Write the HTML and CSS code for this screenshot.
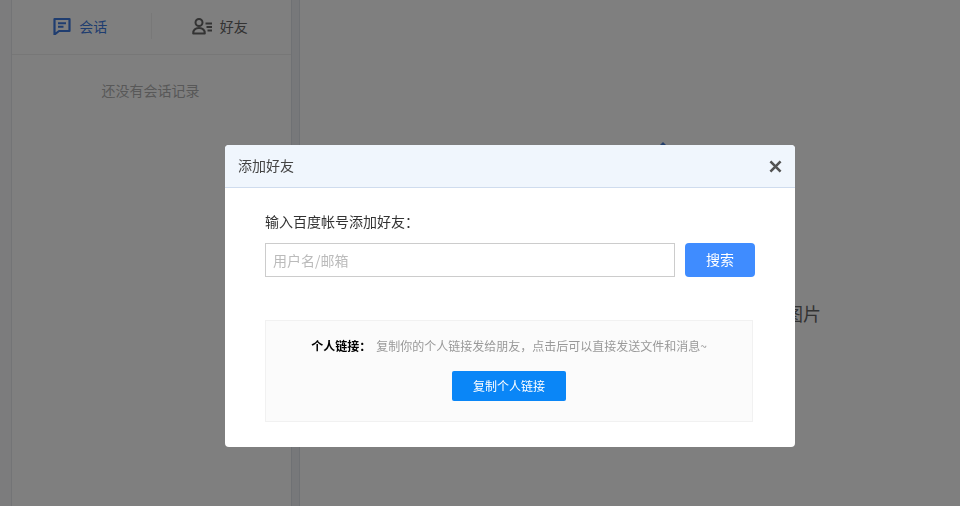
FILE: index.html
```html
<!DOCTYPE html>
<html lang="zh-CN">
<head>
<meta charset="utf-8">
<title>添加好友</title>
<link rel="stylesheet" href="styles.css">
</head>
<body>
<div class="app">
  <div class="strip"></div>
  <aside class="sidebar">
    <nav class="tabs">
      <div class="tab tab-active">
        <svg class="tab-icon" viewBox="0 0 18 18" width="18" height="18" aria-hidden="true"><path d="M1.500 2h15v12H6L1.500 17.500z" fill="none" stroke="currentColor" stroke-width="2.200" stroke-linejoin="round"/><path d="M5 6.200h8M5 9.800h5.500" stroke="currentColor" stroke-width="2"/></svg>
        <span>会话</span>
      </div>
      <div class="tab-divider"></div>
      <div class="tab tab-friends">
        <svg class="tab-icon" viewBox="0 0 20 18" width="20" height="18" aria-hidden="true"><circle cx="7" cy="5.500" r="3.500" fill="none" stroke="currentColor" stroke-width="2"/><path d="M1.200 16.500c0-3.800 2.200-5.500 5.800-5.500s5.800 1.700 5.800 5.500z" fill="none" stroke="currentColor" stroke-width="2" stroke-linejoin="round"/><path d="M13.500 6.500H20M14.500 10H20M15.500 13.500H20" stroke="currentColor" stroke-width="1.800"/></svg>
        <span>好友</span>
      </div>
    </nav>
    <p class="empty">还没有会话记录</p>
  </aside>
  <div class="gutter"></div>
  <main class="main">
    <div class="marker"></div>
    <p class="hint">你可以和好友在这里快速传输与分享文件和图片</p>
  </main>
</div>
<div class="overlay"></div>
<section class="dialog">
  <header class="dialog-head">
    <h2 class="dialog-title">添加好友</h2>
    <svg class="close" viewBox="0 0 12 12" width="13" height="13" aria-hidden="true"><path d="M1.300 1.300l9.400 9.400M10.700 1.300l-9.400 9.400" stroke="currentColor" stroke-width="2.400"/></svg>
  </header>
  <div class="dialog-body">
    <label class="field-label">输入百度帐号添加好友：</label>
    <div class="search-row">
      <input class="search-input" type="text" placeholder="用户名/邮箱">
      <button class="search-btn" type="button">搜索</button>
    </div>
    <div class="link-box">
      <p class="link-text"><b>个人链接：</b>复制你的个人链接发给朋友，点击后可以直接发送文件和消息~</p>
      <button class="copy-btn" type="button">复制个人链接</button>
    </div>
  </div>
</section>
</body>
</html>
```
FILE: styles.css
```css
* { box-sizing: border-box; }
html, body { margin: 0; height: 100%; overflow: hidden; }
body {
  font-family: "Noto Sans CJK SC", "Liberation Sans", sans-serif;
  background: #fff;
}
.app { display: flex; height: 506px; background: #fff; }
.strip { width: 12px; background: #f8f9fb; border-right: 1px solid #e6e8ec; }
.sidebar { width: 279px; background: #fff; }
.gutter { width: 9px; background: #eef0f4; border-left: 1px solid #dfe2e8; border-right: 1px solid #dfe2e8; }
.main { flex: 1; display: flex; flex-direction: column; align-items: center; padding: 142px 0 0 4px; }

.tabs { display: flex; align-items: center; height: 55px; padding-bottom: 2px; border-bottom: 1px solid #eee; }
.tab { flex: 1; display: flex; align-items: center; justify-content: center; gap: 8px; font-size: 14px; color: #666; }
.tab-active { color: #3f7be0; padding-right: 2px; }
.tab-friends { padding-right: 3px; }
.tab-divider { width: 1px; height: 26px; background: #f0f0f0; }
.tab-icon { flex: none; }
.empty { margin: 25px 0 0; padding-right: 2px; text-align: center; font-size: 14px; line-height: 20px; color: #b0b0b0; }

.marker {
  width: 0; height: 0; margin-left: 62px;
  border-left: 5px solid transparent; border-right: 5px solid transparent;
  border-bottom: 5px solid #4a80d8;
}
.hint { margin: 153px 0 0; font-size: 18px; line-height: 26px; color: #666; white-space: nowrap; }

.overlay { position: fixed; inset: 0; background: rgba(0, 0, 0, .5); }
.dialog {
  position: fixed; left: 225px; top: 145px; width: 570px; height: 302px;
  background: #fff; border-radius: 4px; overflow: hidden;
}
.dialog-head {
  display: flex; align-items: center; justify-content: space-between;
  height: 43px; padding: 0 13px 2px 13px;
  background: #f0f6fd; border-bottom: 1px solid #cfdcee;
}
.dialog-title { margin: 0; font-size: 14px; font-weight: 400; color: #444; }
.close { color: #555; margin-top: 2px; }
.dialog-body { padding: 23px 40px 0; }
.field-label { display: block; font-size: 14px; line-height: 20px; color: #333; }
.search-row { display: flex; gap: 10px; margin-top: 12px; }
.search-input {
  width: 410px; height: 34px; padding: 0 7px;
  border: 1px solid #ccc; border-radius: 0; outline: none;
  font: 14px "Noto Sans CJK SC", sans-serif;
}
.search-input::placeholder { color: #bbb; opacity: 1; }
.search-btn {
  width: 70px; height: 34px; padding: 0 0 2px; border: 0; border-radius: 4px;
  background: #3f8cff; color: #fff; font: 14px "Noto Sans CJK SC", sans-serif;
}
.link-box {
  width: 488px; height: 102px; margin-top: 43px; padding-top: 16px;
  background: #fbfbfb; border: 1px solid #f1f1f1; text-align: center;
}
.link-text { margin: 0; font-size: 12px; line-height: 18px; color: #999; white-space: nowrap; }
.link-text b { color: #000; margin-right: 5px; }
.copy-btn {
  display: block; width: 114px; height: 30px; margin: 16px auto 0; padding: 0 0 2px;
  border: 0; border-radius: 2px; background: #0a86f7; color: #fff;
  font: 12px "Noto Sans CJK SC", sans-serif;
}
```
